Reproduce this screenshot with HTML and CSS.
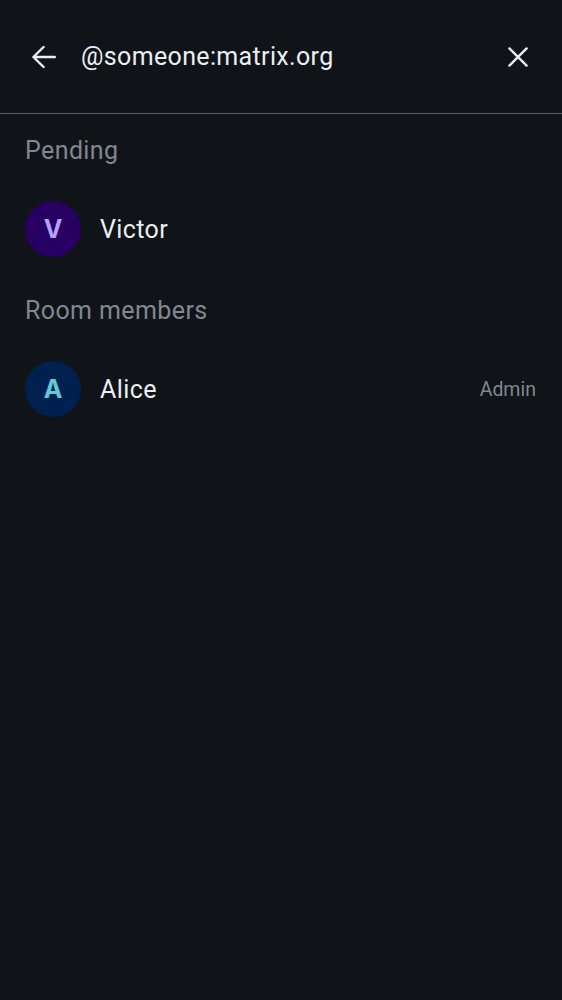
FILE: index.html
```html
<!DOCTYPE html>
<html>
<head>
<meta charset="utf-8">
<link rel="stylesheet" href="styles.css">
</head>
<body>
<div class="screen">
  <header class="topbar">
    <button class="icon-btn back" aria-label="Back">
      <svg width="24" height="24" viewBox="0 0 24 24"><path d="M22.8 12H1.6M11.6 2 1.4 12l10.2 10" fill="none" stroke="#ebeef2" stroke-width="2.4" stroke-linecap="round" stroke-linejoin="round"/></svg>
    </button>
    <div class="query">@someone:matrix.org</div>
    <button class="icon-btn close" aria-label="Clear">
      <svg width="24" height="24" viewBox="0 0 24 24"><path d="M3.4 3.4l17.2 17.2M20.6 3.4 3.4 20.6" fill="none" stroke="#ebeef2" stroke-width="2.4" stroke-linecap="round"/></svg>
    </button>
  </header>
  <section class="section">
    <h2 class="section-title">Pending</h2>
    <div class="member">
      <div class="avatar avatar-v">V</div>
      <div class="name">Victor</div>
    </div>
  </section>
  <section class="section">
    <h2 class="section-title">Room members</h2>
    <div class="member">
      <div class="avatar avatar-a">A</div>
      <div class="name">Alice</div>
      <div class="role">Admin</div>
    </div>
  </section>
</div>
</body>
</html>
```
FILE: styles.css
```css
html, body {
  margin: 0;
  padding: 0;
  background: #101317;
}
body {
  font-family: Roboto, "Noto Sans", sans-serif;
  color: #ebeef2;
  height: 1000px;
}
.screen {
  display: flex;
  flex-direction: column;
}
.topbar {
  height: 113px;
  display: flex;
  align-items: center;
  border-bottom: 1px solid #5c6168;
}
.icon-btn {
  background: none;
  border: 0;
  padding: 0;
  display: flex;
  align-items: center;
  justify-content: center;
  width: 24px;
  height: 24px;
}
.back {
  margin-left: 32px;
}
.query {
  flex: 1;
  margin-left: 25px;
  font-size: 25px;
  color: #ebeef2;
  letter-spacing: 0.35px;
}
.close {
  margin-right: 32px;
}
.section {
  display: flex;
  flex-direction: column;
  padding: 0 26px 0 25px;
}
.section-title {
  margin: 0;
  font-weight: 400;
  font-size: 25px;
  letter-spacing: 0.4px;
  color: #808891;
  height: 32px;
  line-height: 32px;
  padding-top: 21px;
}
.member {
  display: flex;
  align-items: center;
  height: 56px;
  padding: 34px 0 17px;
}
.avatar {
  width: 56px;
  height: 56px;
  border-radius: 50%;
  display: flex;
  align-items: center;
  justify-content: center;
  font-family: Inter, Roboto, sans-serif;
  font-weight: 700;
  font-size: 25px;
}
.avatar-v {
  background: #280064;
  color: #b5a2f9;
}
.avatar-a {
  background: #00204f;
  color: #62c7da;
}
.name {
  flex: 1;
  margin-left: 19px;
  font-size: 25px;
  letter-spacing: 0.4px;
  color: #ebeef2;
}
.role {
  font-size: 19.5px;
  color: #808891;
}
```
